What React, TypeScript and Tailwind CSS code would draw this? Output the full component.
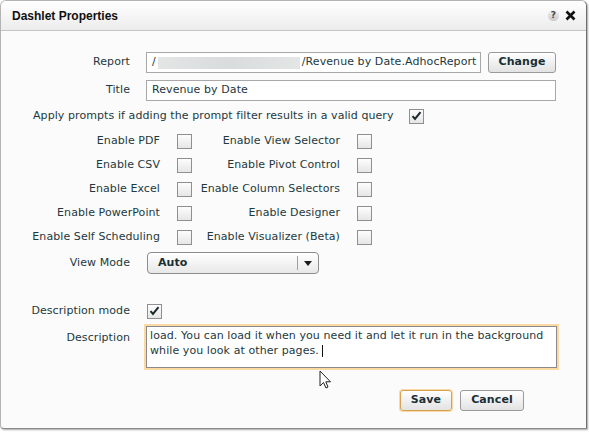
import React from "react";

const font = { fontFamily: '"DejaVu Sans", Verdana, sans-serif' };

function Box({ checked = false }: { checked?: boolean }) {
  return (
    <div className="w-[15px] h-[15px] border border-[#8f8f8f] bg-gradient-to-b from-[#fdfdfd] to-[#e6e6e6] flex items-center justify-center shrink-0">
      {checked && (
        <svg width="11" height="10" viewBox="0 0 11 10">
          <path d="M1.5 5.2 L4 8 L9.5 1.2" stroke="#1c2a2e" strokeWidth="2" fill="none" />
        </svg>
      )}
    </div>
  );
}

function CbRow({ l, r }: { l: string; r: string }) {
  return (
    <div className="flex items-center h-[24px]">
      <div className="w-[159px] text-right">{l}</div>
      <div className="ml-[17px]"><Box /></div>
      <div className="w-[148px] text-right">{r}</div>
      <div className="ml-[17px]"><Box /></div>
    </div>
  );
}

export default function App() {
  return (
    <div className="w-[589px] h-[433px] bg-white relative" style={font}>
      <div className="w-[587px] h-[429px] border border-[#b4b4b4] border-r-[#6e6e6e] border-b-[#8a8a8a] rounded-t-[6px] rounded-bl-[4px] bg-[#fbfbfb] shadow-[1px_1px_2px_rgba(0,0,0,0.35)] text-[11px] tracking-[0.08px] text-[#1d3940] overflow-hidden">
        <div className="h-[30px] border-b border-[#c4c4c4] bg-gradient-to-b from-[#ffffff] to-[#ececec] flex items-center pl-[11px] pr-[10px]">
          <div className="font-bold text-[12px] text-[#111] tracking-normal" style={{ fontFamily: '"Liberation Sans", Arial, sans-serif' }}>Dashlet Properties</div>
          <div className="ml-auto flex items-center gap-[6px]">
            <div className="w-[11px] h-[11px] rounded-full bg-gradient-to-b from-[#f4f4f4] to-[#c8c8c8] flex items-center justify-center text-[9px] font-bold text-[#444] leading-none">?</div>
            <svg width="11" height="11" viewBox="0 0 11 11">
              <path d="M1.5 1.5 L9.5 9.5 M9.5 1.5 L1.5 9.5" stroke="#111" strokeWidth="2.6" />
            </svg>
          </div>
        </div>

        <div className="pt-[21px]">
          <div className="flex items-center h-[21px]">
            <div className="w-[129px] text-right">Report</div>
            <div className="ml-[16px] w-[335px] h-[21px] border border-[#a8a8a8] bg-white flex items-center pl-[5px]">
              <span>/</span>
              <div className="w-[142px] h-[12px] mx-[2px] bg-gradient-to-r from-[#e4e6e6] via-[#d8dcdc] to-[#e4e6e6]" />
              <span>/Revenue by Date.AdhocReport</span>
            </div>
            <div className="ml-[7px] w-[68px] h-[21px] border border-[#9a9a9a] rounded-[3px] bg-gradient-to-b from-[#ffffff] to-[#e2e2e2] flex items-center justify-center font-bold text-[#1a2f35]">Change</div>
          </div>

          <div className="flex items-center h-[21px] mt-[7px]">
            <div className="w-[129px] text-right">Title</div>
            <div className="ml-[16px] w-[410px] h-[21px] border border-[#a8a8a8] bg-white flex items-center pl-[5px]">Revenue by Date</div>
          </div>

          <div className="flex items-center h-[24px] mt-[3px]">
            <div className="ml-[32px]">Apply prompts if adding the prompt filter results in a valid query</div>
            <div className="ml-auto mr-[162px]"><Box checked /></div>
          </div>

          <div className="mt-[1px]">
            <CbRow l="Enable PDF" r="Enable View Selector" />
            <CbRow l="Enable CSV" r="Enable Pivot Control" />
            <CbRow l="Enable Excel" r="Enable Column Selectors" />
            <CbRow l="Enable PowerPoint" r="Enable Designer" />
            <CbRow l="Enable Self Scheduling" r="Enable Visualizer (Beta)" />
          </div>

          <div className="flex items-center h-[22px] mt-[3px]">
            <div className="w-[129px] text-right">View Mode</div>
            <div className="ml-[17px] w-[172px] h-[22px] border border-[#8c8c8c] rounded-[4px] bg-gradient-to-b from-[#ffffff] to-[#e8e8e8] flex items-center">
              <div className="flex-1 pl-[10px] font-bold text-[#1a2f35]">Auto</div>
              <div className="w-px h-[14px] bg-[#a0a0a0]" />
              <div className="w-[20px] flex items-center justify-center">
                <svg width="8" height="5" viewBox="0 0 8 5"><path d="M0 0 H8 L4 5 Z" fill="#1a1a1a" /></svg>
              </div>
            </div>
          </div>

          <div className="flex items-center h-[16px] mt-[29px]">
            <div className="w-[129px] text-right">Description mode</div>
            <div className="ml-[17px]"><Box checked /></div>
          </div>

          <div className="flex items-start mt-[7px]">
            <div className="w-[129px] text-right pt-[4px]">Description</div>
            <div className="ml-[16px] w-[411px] h-[42px] border border-[#8a8a8a] bg-white shadow-[0_0_0_2px_#fbd9a4] px-[3px] pt-[1px] leading-[15px] text-[#1d3940]">
              load. You can load it when you need it and let it run in the background while you look at other pages. <span className="inline-block w-px h-[12px] bg-[#111] align-middle" />
            </div>
          </div>

          <div className="flex justify-end mt-[22px] pr-[62px] gap-[8px]">
            <div className="w-[52px] h-[21px] border border-[#d9a24e] rounded-[3px] bg-gradient-to-b from-[#ffffff] to-[#e2e2e2] shadow-[0_0_0_1px_#f6d9a6] flex items-center justify-center font-bold text-[#1a2f35]">Save</div>
            <div className="w-[64px] h-[21px] border border-[#9a9a9a] rounded-[3px] bg-gradient-to-b from-[#ffffff] to-[#e2e2e2] flex items-center justify-center font-bold text-[#1a2f35]">Cancel</div>
          </div>
        </div>
      </div>

      <svg className="absolute left-[319px] top-[370px]" width="14" height="20" viewBox="0 0 14 20">
        <path d="M1 1 L1 16 L4.5 12.5 L7 18 L9 17 L6.8 11.8 L11.5 11.8 Z" fill="#fff" stroke="#222" strokeWidth="1" />
      </svg>
    </div>
  );
}
